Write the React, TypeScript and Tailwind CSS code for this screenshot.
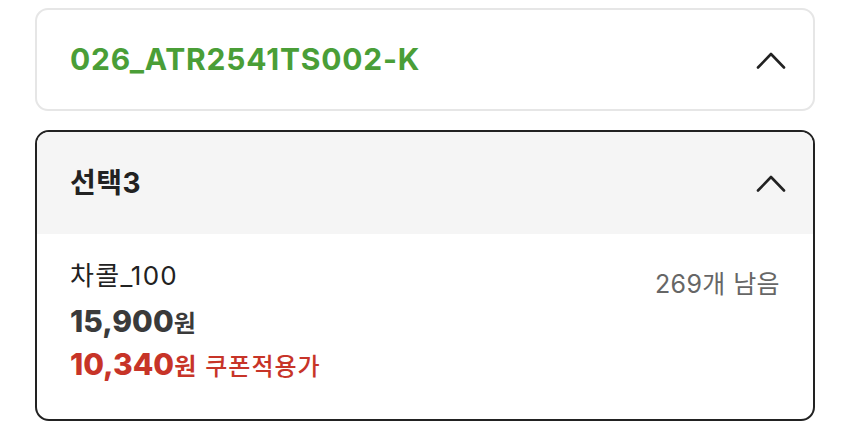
import React from "react";

const Chevron = () => (
  <svg width="30" height="18" viewBox="0 0 30 18" fill="none">
    <path d="M2 16.5 L15 3 L28 16.5" stroke="#222" strokeWidth="2.6" strokeLinecap="round" strokeLinejoin="round" />
  </svg>
);

export default function App() {
  return (
    <div
      className="w-[850px] h-[435px] bg-white px-[35px] pt-[8px]"
      style={{ fontFamily: 'Inter, "Noto Sans CJK KR", sans-serif' }}
    >
      <div className="flex flex-col gap-[19px] w-[780px]">
        <div className="h-[103px] rounded-[13px] border-2 border-[#e6e6e6] flex items-center justify-between pl-[33px] pr-[27px]">
          <span className="text-[30px] font-bold text-[#4a9e37] tracking-[0.8px]">026_ATR2541TS002-K</span>
          <Chevron />
        </div>
        <div className="h-[291px] rounded-[14px] border-2 border-[#222] overflow-hidden flex flex-col">
          <div className="h-[102px] bg-[#f5f5f5] flex items-center justify-between pl-[33px] pr-[27px]">
            <span className="text-[28px] font-bold text-[#222] tracking-[0.5px]">선택3</span>
            <Chevron />
          </div>
          <div className="flex-1 flex justify-between pl-[33px] pr-[33px] pt-[24px]">
            <div className="flex flex-col">
              <span className="text-[26px] text-[#222] leading-[36px] tracking-[1.3px]">차콜_100</span>
              <span className="text-[#3a3a3a] font-extrabold leading-[44px] mt-[5px]">
                <span className="text-[30px]">15,900</span>
                <span className="text-[24px] font-bold">원</span>
              </span>
              <span className="text-[#c73428] font-extrabold leading-[40px] mt-[-4px]">
                <span className="text-[30px]">10,340</span>
                <span className="text-[24px] font-bold">원</span>
                <span className="text-[24px] font-medium ml-[9px] tracking-[1px]">쿠폰적용가</span>
              </span>
            </div>
            <span className="text-[25px] text-[#666] leading-[36px] mt-[8px] tracking-[0.4px]">269개 남음</span>
          </div>
        </div>
      </div>
    </div>
  );
}
